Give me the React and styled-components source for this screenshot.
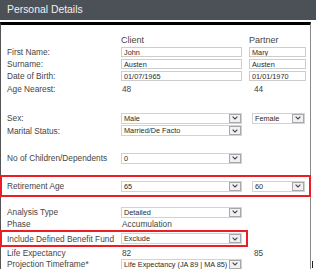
import React from 'react';
import styled, { createGlobalStyle } from 'styled-components';

const GlobalStyle = createGlobalStyle`
  html, body {
    margin: 0;
    padding: 0;
    background: #fff;
  }
  body {
    font-family: "Liberation Sans", Arial, sans-serif;
    color: #444;
  }
`;

const Page = styled.div`
  width: 316px;
  height: 269px;
  overflow: hidden;
`;

const Header = styled.div`
  height: 20px;
  line-height: 20px;
  padding-left: 7px;
  background: #4c5158;
  color: #f0f0f0;
  font-size: 10.4px;
`;

const Panel = styled.div`
  margin-top: 2px;
  width: 309px;
  min-height: 260px;
  padding-top: 9px;
  border-top: 3px solid #000;
  border-left: 1px solid #555;
  border-right: 1px solid #8a8a8a;
`;

const Row = styled.div`
  display: grid;
  grid-template-columns: 114px 128px 1fr;
  align-items: center;
  height: ${p => p.$h || 12}px;
  margin-top: ${p => p.$gap || 0}px;
  padding-left: 6px;
  font-size: 8.3px;
  white-space: nowrap;
`;

const RedBox = styled.div`
  margin: ${p => p.$gap || 0}px 0 0 -1px;
  width: ${p => p.$w}px;
  border: 2px solid #ee1c24;

  ${Row} {
    padding-left: 5px;
  }
`;

const Label = styled.span`
  color: #454545;
`;

const ColHead = styled.span`
  font-size: 9px;
  color: #454545;
`;

const Value = styled.span`
  padding-left: ${p => p.$pad || 1}px;
  color: #444;
`;

const TextBox = styled.input`
  box-sizing: border-box;
  width: ${p => p.$w}px;
  height: 10px;
  margin: 0;
  padding: 0 2px;
  border: 1px solid #cdcdcd;
  background: #fff;
  font-family: "Liberation Sans", Arial, sans-serif;
  font-size: 7.3px;
  color: #2a2a2a;
  outline: none;
`;

const SelectBox = styled.div`
  box-sizing: border-box;
  display: flex;
  width: ${p => p.$w}px;
  height: 11px;
  margin-left: ${p => p.$ml || 0}px;
  border: 1px solid #d2d2d2;
  background: #fff;
  font-size: 7.3px;
  color: #2a2a2a;
`;

const SelectText = styled.span`
  flex: 1;
  padding-left: 2px;
  line-height: 9px;
  overflow: hidden;
`;

const ArrowButton = styled.span`
  box-sizing: border-box;
  display: flex;
  align-items: center;
  justify-content: center;
  width: 12px;
  height: 9px;
  border: 1px solid #a8a8a8;
  background: #f0f0f0;
`;

const Caret = styled.div`
  position: absolute;
  left: 312px;
  top: 261px;
  width: 1px;
  height: 7px;
  background: #222;
`;

function Chevron() {
  return (
    <svg width="6" height="4" viewBox="0 0 6 4">
      <polyline points="0.6,0.7 3,3 5.4,0.7" fill="none" stroke="#3a4660" strokeWidth="1.1" />
    </svg>
  );
}

function Select({ value, w, ml }) {
  return (
    <SelectBox $w={w} $ml={ml}>
      <SelectText>{value}</SelectText>
      <ArrowButton><Chevron /></ArrowButton>
    </SelectBox>
  );
}

export default function App() {
  return (
    <Page>
      <GlobalStyle />
      <Header>Personal Details</Header>
      <Panel>
        <Row>
          <span />
          <ColHead>Client</ColHead>
          <ColHead>Partner</ColHead>
        </Row>
        <Row>
          <Label>First Name:</Label>
          <TextBox $w={121} defaultValue="John" readOnly />
          <TextBox $w={57} defaultValue="Mary" readOnly />
        </Row>
        <Row>
          <Label>Surname:</Label>
          <TextBox $w={121} defaultValue="Austen" readOnly />
          <TextBox $w={57} defaultValue="Austen" readOnly />
        </Row>
        <Row>
          <Label>Date of Birth:</Label>
          <TextBox $w={121} defaultValue="01/07/1965" readOnly />
          <TextBox $w={57} defaultValue="01/01/1970" readOnly />
        </Row>
        <Row $h={14}>
          <Label>Age Nearest:</Label>
          <Value>48</Value>
          <Value $pad={5}>44</Value>
        </Row>

        <Row $gap={16}>
          <Label>Sex:</Label>
          <Select value="Male" w={121} />
          <Select value="Female" w={53} ml={3} />
        </Row>
        <Row $h={13}>
          <Label>Marital Status:</Label>
          <Select value="Married/De Facto" w={121} />
        </Row>

        <Row $gap={15}>
          <Label>No of Children/Dependents</Label>
          <Select value="0" w={121} />
        </Row>

        <RedBox $gap={11} $w={307}>
          <Row $h={18}>
            <Label>Retirement Age</Label>
            <Select value="65" w={121} />
            <Select value="60" w={53} ml={3} />
          </Row>
        </RedBox>

        <Row $gap={9}>
          <Label>Analysis Type</Label>
          <Select value="Detailed" w={121} />
        </Row>
        <Row>
          <Label>Phase</Label>
          <Value>Accumulation</Value>
        </Row>
        <RedBox $w={244}>
          <Row $h={13}>
            <Label>Include Defined Benefit Fund</Label>
            <Select value="Exclude" w={121} />
          </Row>
        </RedBox>
        <Row $h={11}>
          <Label>Life Expectancy</Label>
          <Value>82</Value>
          <Value $pad={5}>85</Value>
        </Row>
        <Row>
          <Label>Projection Timeframe*</Label>
          <Select value="Life Expectancy (JA 89 | MA 85)" w={121} />
        </Row>
      </Panel>
      <Caret />
    </Page>
  );
}
